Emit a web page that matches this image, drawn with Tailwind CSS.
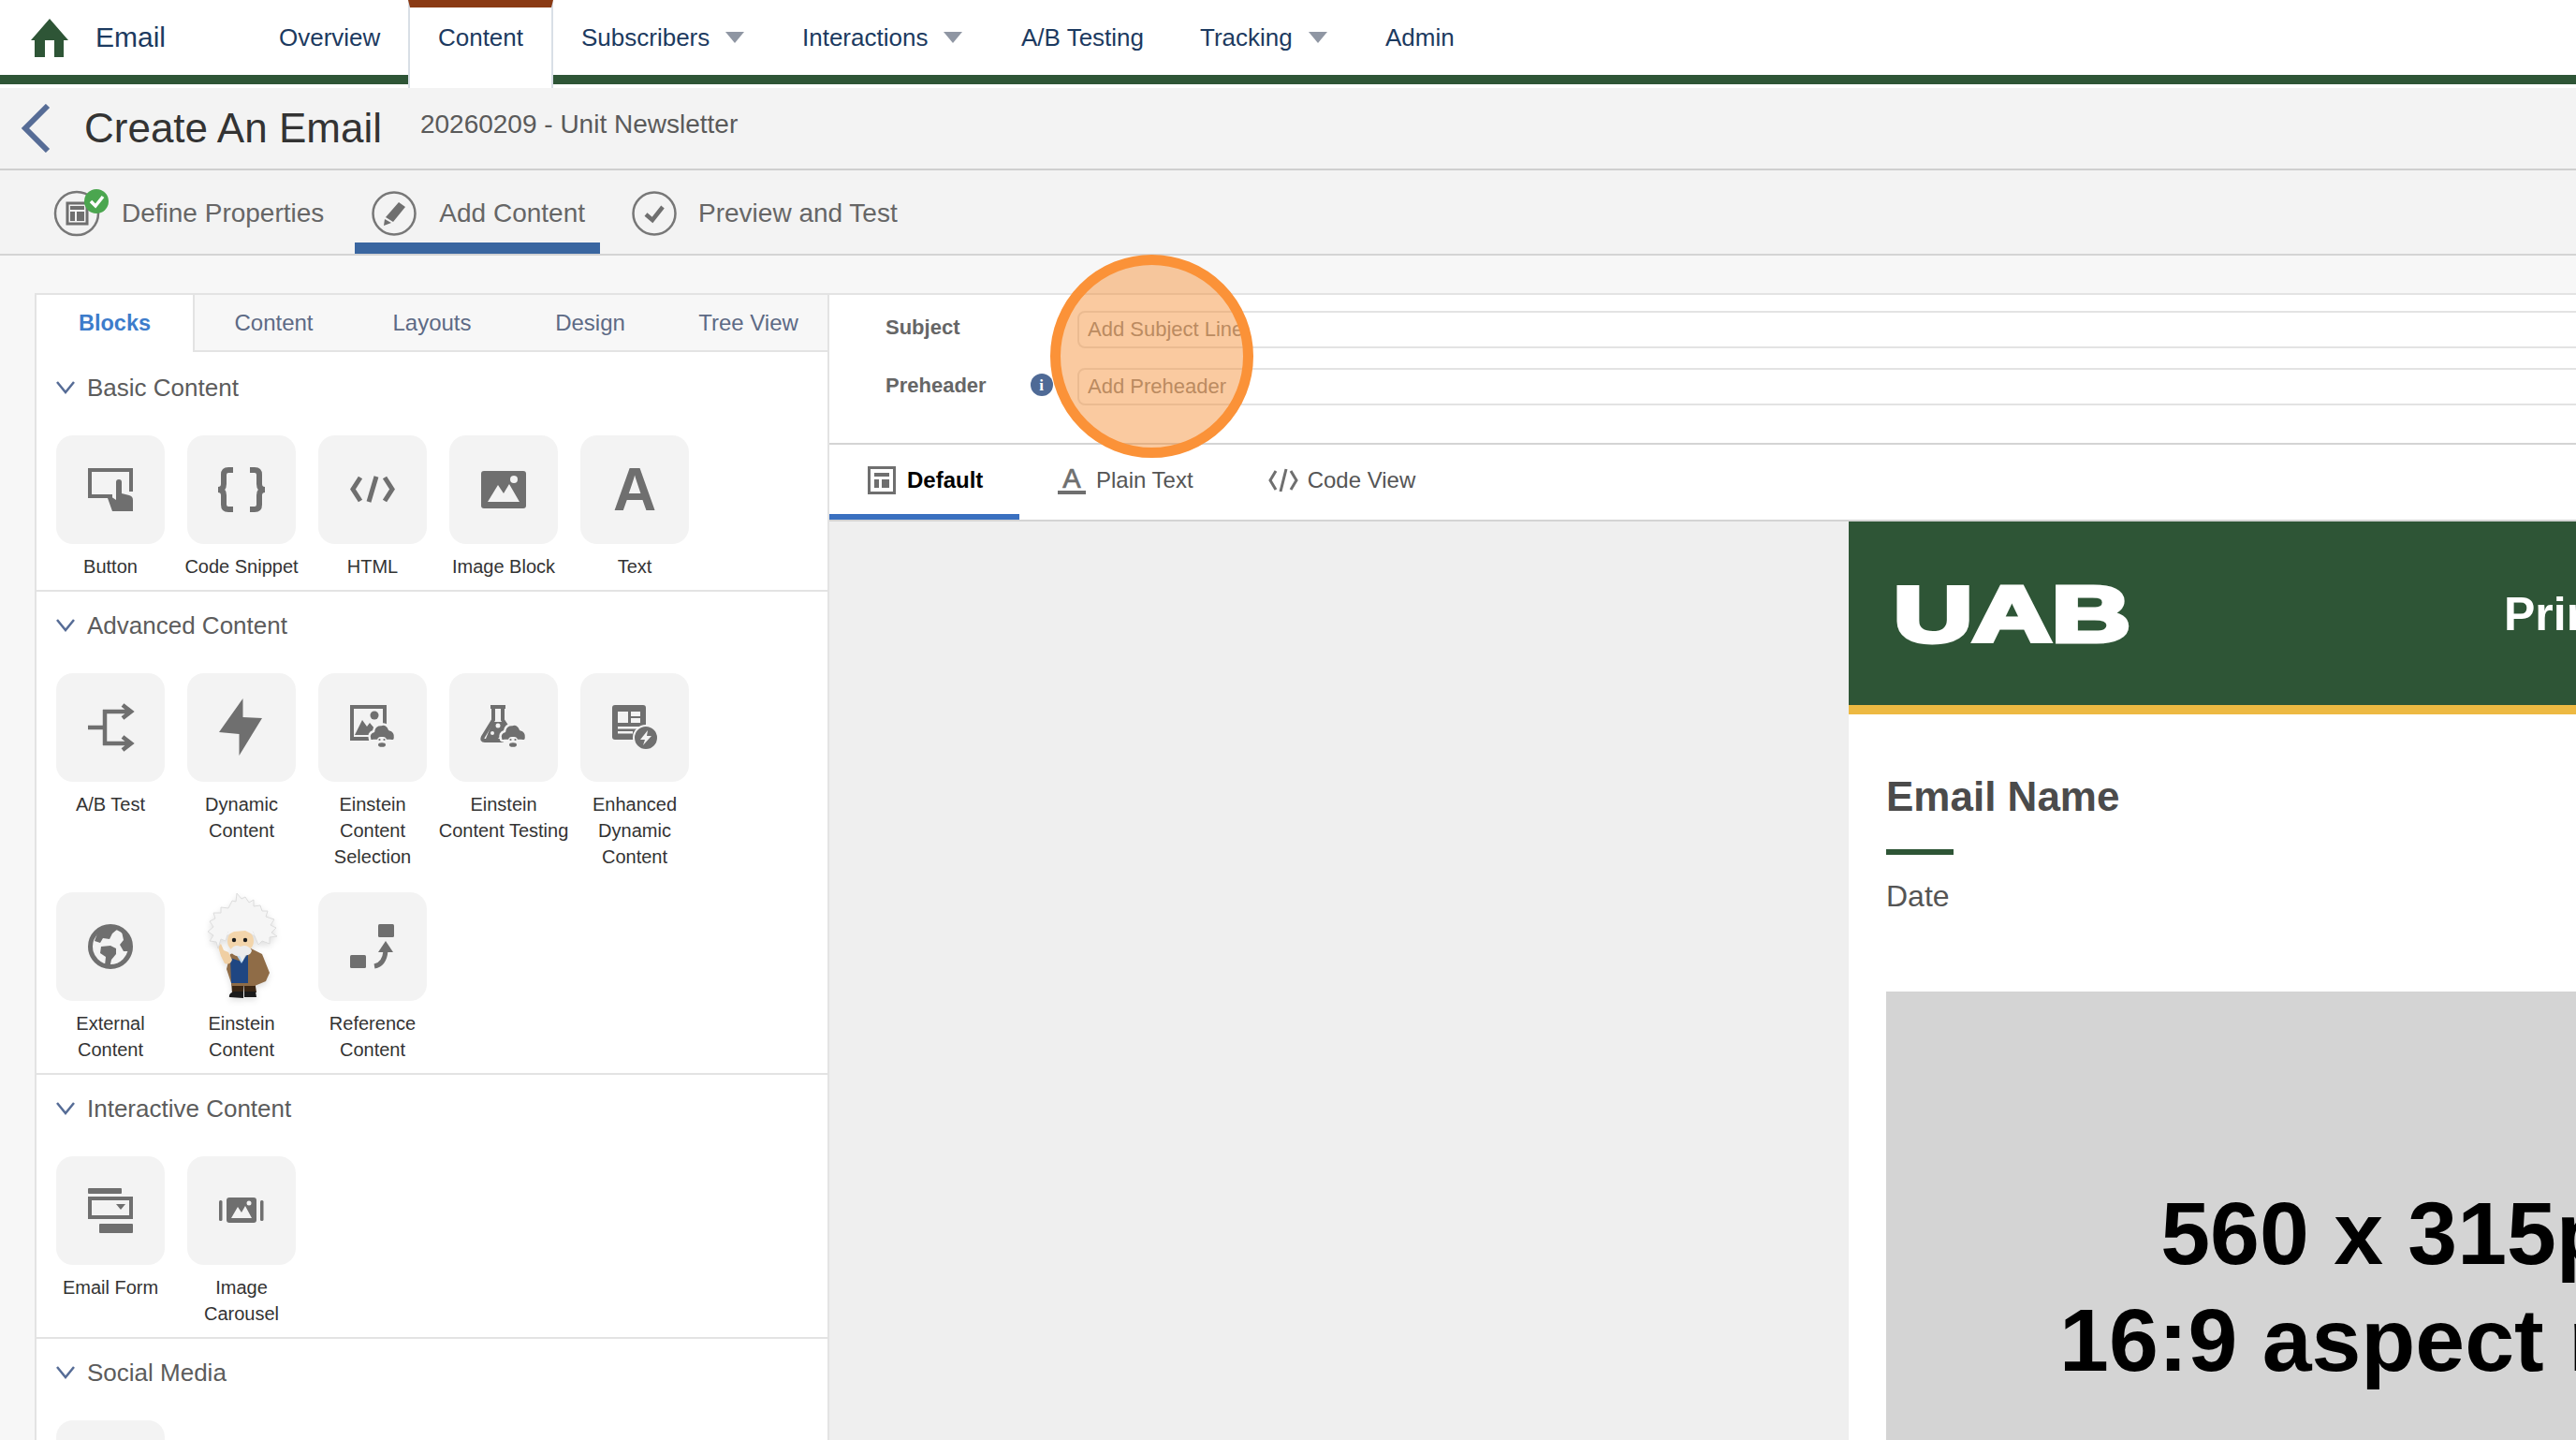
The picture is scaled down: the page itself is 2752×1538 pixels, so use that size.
<!DOCTYPE html>
<html lang="en">
<head>
  <meta charset="UTF-8">
  <meta name="viewport" content="width=device-width, initial-scale=1.0">
  <title>Create An Email</title>
  <script src="https://cdn.jsdelivr.net/npm/@tailwindcss/browser@4"></script>
</head>
<body class="relative h-[1538px] w-[2752px] overflow-hidden bg-white font-['Liberation_Sans',Arial,sans-serif]">

  <svg class="hidden">
    <symbol id="head" viewBox="-16 -16 32 32" overflow="visible">
      <path d="M-13 2Q-15-4-9-6Q-8-13-1-13Q5-15 8-8Q15-6 14 1Q14 5 9 4L-9 4Q-13 5-13 2Z" fill="#6f6f6f" stroke="#f3f3f3" stroke-width="2.5"/>
      <rect x="-5" y="0" width="10" height="11" rx="4" fill="#f3f3f3"/>
      <circle cx="-2.5" cy="3" r="1.1" fill="#6f6f6f"/>
      <circle cx="2.5" cy="3" r="1.1" fill="#6f6f6f"/>
      <ellipse cx="0" cy="8.5" rx="4" ry="2.3" fill="#6f6f6f"/>
    </symbol>
  </svg>

  <!-- App nav -->
  <header class="mb-1 flex h-[90px] border-b-[10px] border-[#2e5536] bg-white text-[26px] text-[#1c3a60]">
    <div class="flex w-[298px] items-center">
      <svg class="ml-[33px] h-[41px] w-[40px]" viewBox="0 0 40 41" fill="#2e5536"><path d="M20 0L40 23H35V41H25V23H15V41H4V23H0Z"/></svg>
      <span class="ml-[29px] mb-[2px] text-[30px]">Email</span>
    </div>
    <div class="flex h-[80px] w-[138px] items-center">Overview</div>
    <div class="relative flex h-[94px] w-[155px] items-start justify-center self-start border-x-2 border-t-8 border-x-[#d9dfe6] border-t-[#8a3a14] bg-white pt-[17px] leading-[30px]">Content</div>
    <div class="ml-[30px] flex h-[80px] w-[236px] items-center">Subscribers<svg class="ml-[17px] h-3 w-5" viewBox="0 0 20 12" fill="#8f96a3"><path d="M0 0H20L10 12Z"/></svg></div>
    <div class="flex h-[80px] w-[234px] items-center">Interactions<svg class="ml-[17px] h-3 w-5" viewBox="0 0 20 12" fill="#8f96a3"><path d="M0 0H20L10 12Z"/></svg></div>
    <div class="flex h-[80px] w-[191px] items-center">A/B Testing</div>
    <div class="flex h-[80px] w-[198px] items-center">Tracking<svg class="ml-[17px] h-3 w-5" viewBox="0 0 20 12" fill="#8f96a3"><path d="M0 0H20L10 12Z"/></svg></div>
    <div class="flex h-[80px] items-center">Admin</div>
  </header>

  <!-- Page title -->
  <div class="flex h-[88px] items-center border-b-2 border-[#cfcfcf] bg-[#f3f3f3]">
    <svg class="ml-[22px] h-[52px] w-[32px]" viewBox="0 0 32 52" fill="none" stroke="#566c96" stroke-width="6"><path d="M29 2L5 26L29 50"/></svg>
    <h1 class="ml-[36px] text-[44px] text-[#333]">Create An Email</h1>
    <span class="ml-[41px] mb-2 text-[28px] text-[#5a5a5a]">20260209 - Unit Newsletter</span>
  </div>

  <!-- Wizard steps -->
  <div class="flex h-[91px] gap-[15px] border-b-2 border-[#d4d4d4] bg-[#f3f3f3] pl-[39px] text-[28px] text-[#666]">
    <div class="flex h-[89px] items-center gap-[24px] border-b-[12px] border-transparent pt-[14px] pr-[18px] pl-[19px]">
      <svg class="h-12 w-12 overflow-visible" viewBox="0 0 48 48">
        <circle cx="24" cy="24" r="23" fill="none" stroke="#777" stroke-width="2.5"/>
        <rect x="14" y="13" width="21" height="22" fill="none" stroke="#6f6f6f" stroke-width="3"/>
        <rect x="17" y="16" width="15" height="4" fill="#6f6f6f"/>
        <rect x="17" y="22" width="5" height="10" fill="#6f6f6f"/>
        <rect x="24" y="22" width="8" height="10" fill="#6f6f6f"/>
        <circle cx="45" cy="11" r="13" fill="#4ba64f"/>
        <path d="M39 11L44 16L52 6" fill="none" stroke="#fff" stroke-width="3.5"/>
      </svg>
      <span>Define Properties</span>
    </div>
    <div class="flex h-[89px] items-center gap-[24px] border-b-[12px] border-[#3a66a0] pt-[14px] pr-[16px] pl-[18px]">
      <svg class="h-12 w-12" viewBox="0 0 48 48">
        <circle cx="24" cy="24" r="22.5" fill="none" stroke="#777" stroke-width="2.5"/>
        <path d="M29 12L36 17L23 33L15 28Z" fill="#6f6f6f"/>
        <path d="M14 30L21 34L13 37Z" fill="#6f6f6f"/>
      </svg>
      <span>Add Content</span>
    </div>
    <div class="flex h-[89px] items-center gap-[23px] border-b-[12px] border-transparent pt-[14px] pr-[18px] pl-[19px]">
      <svg class="h-12 w-12" viewBox="0 0 48 48">
        <circle cx="24" cy="24" r="22.5" fill="none" stroke="#777" stroke-width="2.5"/>
        <path d="M15 25L22 31L33 17" fill="none" stroke="#6f6f6f" stroke-width="4.5"/>
      </svg>
      <span>Preview and Test</span>
    </div>
  </div>

  <main class="flex h-[1265px] overflow-hidden bg-[#f7f7f7] pt-[40px] pl-[37px]">
    <!-- Blocks panel -->
    <aside class="h-full w-[849px] shrink-0 overflow-hidden border-x-2 border-t-2 border-[#e3e3e3] bg-white">
      <div class="grid h-[61px] grid-cols-5 items-stretch text-center text-[24px] text-[#5d6a85]">
        <div class="flex items-center justify-center border-r-2 border-[#e3e3e3] bg-white text-[23.5px] font-bold text-[#3d7ccb]">Blocks</div>
        <div class="flex items-center justify-center border-b-2 border-[#e3e3e3] bg-[#f7f7f7]">Content</div>
        <div class="flex items-center justify-center border-b-2 border-[#e3e3e3] bg-[#f7f7f7]">Layouts</div>
        <div class="flex items-center justify-center border-b-2 border-[#e3e3e3] bg-[#f7f7f7]">Design</div>
        <div class="flex items-center justify-center border-b-2 border-[#e3e3e3] bg-[#f7f7f7]">Tree View</div>
      </div>

      <!-- Basic Content -->
      <section class="border-b-2 border-[#e3e3e3] pt-[24px] pr-[20px] pb-[11px] pl-[21px]">
        <div class="flex h-[28px] items-center gap-[13px] text-[26px] text-[#5c5c5c]">
          <svg class="h-[14px] w-5" viewBox="0 0 20 14" fill="none" stroke="#566c96" stroke-width="2.5"><path d="M1 1L10 12L19 1"/></svg>Basic Content
        </div>
        <div class="mt-[37px] grid grid-cols-[repeat(5,116px)] gap-6">
          <div>
            <div class="h-[116px] w-[116px] rounded-[18px] bg-[#f3f3f3]">
              <svg class="h-full w-full" viewBox="0 0 116 116" fill="#6f6f6f">
                <path d="M60 65H36V37H80V60" fill="none" stroke="#6f6f6f" stroke-width="4"/>
                <path d="M64 50Q64 47 67 47Q70 47 70 50V62L78 64Q82 65 82 69V81H60L55 67Q55 64 58 65L64 69Z"/>
              </svg>
            </div>
            <p class="-mx-3 mt-[10px] text-center text-[20px] leading-[28px] whitespace-nowrap text-[#333]">Button</p>
          </div>
          <div>
            <div class="h-[116px] w-[116px] rounded-[18px] bg-[#f3f3f3]">
              <svg class="h-full w-full" viewBox="0 0 116 116" fill="none" stroke="#6f6f6f" stroke-width="6">
                <path d="M49 37H44Q39 37 39 42V52Q39 58 33 58Q39 58 39 64V74Q39 79 44 79H49"/>
                <path d="M67 37H72Q77 37 77 42V52Q77 58 83 58Q77 58 77 64V74Q77 79 72 79H67"/>
              </svg>
            </div>
            <p class="-mx-3 mt-[10px] text-center text-[20px] leading-[28px] whitespace-nowrap text-[#333]">Code Snippet</p>
          </div>
          <div>
            <div class="h-[116px] w-[116px] rounded-[18px] bg-[#f3f3f3]">
              <svg class="h-full w-full" viewBox="0 0 116 116" fill="none" stroke="#6f6f6f" stroke-width="5">
                <path d="M45 45L37 57.5L45 70M62 44L54 71M71 45L79 57.5L71 70"/>
              </svg>
            </div>
            <p class="-mx-3 mt-[10px] text-center text-[20px] leading-[28px] whitespace-nowrap text-[#333]">HTML</p>
          </div>
          <div>
            <div class="h-[116px] w-[116px] rounded-[18px] bg-[#f3f3f3]">
              <svg class="h-full w-full" viewBox="0 0 116 116">
                <rect x="34" y="38" width="48" height="40" rx="3" fill="#6f6f6f"/>
                <circle cx="69" cy="47" r="4" fill="#f3f3f3"/>
                <path d="M41 71L52 53L58 62L64 52L75 71Z" fill="#f3f3f3"/>
              </svg>
            </div>
            <p class="-mx-3 mt-[10px] text-center text-[20px] leading-[28px] whitespace-nowrap text-[#333]">Image Block</p>
          </div>
          <div>
            <div class="flex h-[116px] w-[116px] items-center justify-center rounded-[18px] bg-[#f3f3f3] text-[64px] font-bold text-[#6f6f6f]">A</div>
            <p class="-mx-3 mt-[10px] text-center text-[20px] leading-[28px] whitespace-nowrap text-[#333]">Text</p>
          </div>
        </div>
      </section>

      <!-- Advanced Content -->
      <section class="border-b-2 border-[#e3e3e3] pt-[22px] pr-[20px] pb-[11px] pl-[21px]">
        <div class="flex h-[28px] items-center gap-[13px] text-[26px] text-[#5c5c5c]">
          <svg class="h-[14px] w-5" viewBox="0 0 20 14" fill="none" stroke="#566c96" stroke-width="2.5"><path d="M1 1L10 12L19 1"/></svg>Advanced Content
        </div>
        <div class="mt-[37px] grid grid-cols-[repeat(5,116px)] gap-6">
          <div>
            <div class="h-[116px] w-[116px] rounded-[18px] bg-[#f3f3f3]">
              <svg class="h-full w-full" viewBox="0 0 116 116" fill="none" stroke="#6f6f6f" stroke-width="4.5">
                <path d="M34 58H52M52 39V77M50 41H78M50 75H78M71 34L80 41L71 48M71 68L80 75L71 82"/>
              </svg>
            </div>
            <p class="-mx-3 mt-[10px] text-center text-[20px] leading-[28px] whitespace-nowrap text-[#333]">A/B Test</p>
          </div>
          <div>
            <div class="h-[116px] w-[116px] rounded-[18px] bg-[#f3f3f3]">
              <svg class="h-full w-full" viewBox="0 0 116 116" fill="#6f6f6f"><path d="M59.5 27L34 63L55.5 65V88L80 48L59.5 47Z"/></svg>
            </div>
            <p class="-mx-3 mt-[10px] text-center text-[20px] leading-[28px] whitespace-nowrap text-[#333]">Dynamic<br>Content</p>
          </div>
          <div>
            <div class="h-[116px] w-[116px] rounded-[18px] bg-[#f3f3f3]">
              <svg class="h-full w-full overflow-visible" viewBox="0 0 116 116" fill="#6f6f6f">
                <rect x="36" y="36" width="35" height="34" fill="none" stroke="#6f6f6f" stroke-width="4"/>
                <circle cx="60" cy="45" r="4.5"/>
                <path d="M39 66L47 50L52 57L55 53L66 66Z"/>
                <use href="#head" x="52" y="52" width="32" height="32"/>
              </svg>
            </div>
            <p class="-mx-3 mt-[10px] text-center text-[20px] leading-[28px] whitespace-nowrap text-[#333]">Einstein<br>Content<br>Selection</p>
          </div>
          <div>
            <div class="h-[116px] w-[116px] rounded-[18px] bg-[#f3f3f3]">
              <svg class="h-full w-full overflow-visible" viewBox="0 0 116 116" fill="#6f6f6f">
                <path d="M44 36H60M47 36V50L36 68Q34 72 38 72H58M57 36V50L65 62" fill="none" stroke="#6f6f6f" stroke-width="4"/>
                <path d="M43 60L47 52L58 52L62 60L52 70H39Z"/>
                <circle cx="46" cy="64" r="2" fill="#f3f3f3"/>
                <circle cx="52" cy="56" r="2.5" fill="#f3f3f3"/>
                <use href="#head" x="52" y="52" width="32" height="32"/>
              </svg>
            </div>
            <p class="-mx-3 mt-[10px] text-center text-[20px] leading-[28px] whitespace-nowrap text-[#333]">Einstein<br>Content Testing</p>
          </div>
          <div>
            <div class="h-[116px] w-[116px] rounded-[18px] bg-[#f3f3f3]">
              <svg class="h-full w-full" viewBox="0 0 116 116" fill="#6f6f6f">
                <rect x="34" y="34" width="36" height="37" rx="3"/>
                <rect x="40" y="41" width="11" height="12" fill="#f3f3f3"/>
                <rect x="54" y="41" width="10" height="5" fill="#f3f3f3"/>
                <rect x="54" y="48" width="10" height="5" fill="#f3f3f3"/>
                <rect x="40" y="57" width="24" height="2.5" fill="#f3f3f3"/>
                <rect x="40" y="62" width="16" height="2.5" fill="#f3f3f3"/>
                <circle cx="70" cy="69" r="13" stroke="#f3f3f3" stroke-width="2"/>
                <path d="M72 61L64 71H69L67 77L76 67H71Z" fill="#f3f3f3"/>
              </svg>
            </div>
            <p class="-mx-3 mt-[10px] text-center text-[20px] leading-[28px] whitespace-nowrap text-[#333]">Enhanced<br>Dynamic<br>Content</p>
          </div>
          <div>
            <div class="h-[116px] w-[116px] rounded-[18px] bg-[#f3f3f3]">
              <svg class="h-full w-full" viewBox="0 0 116 116" fill="#6f6f6f">
                <circle cx="58" cy="58" r="21.5" fill="none" stroke="#6f6f6f" stroke-width="5"/>
                <path d="M44 44Q50 36 60 36L66 39L60 44L57 50L50 49L47 54L41 52Z"/>
                <path d="M48 58L58 57L64 60L64 66L59 72L57 81L52 78L53 69L47 65Z"/>
                <path d="M70 42L79 52L78 63L72 63L68 56L72 51Z"/>
              </svg>
            </div>
            <p class="-mx-3 mt-[10px] text-center text-[20px] leading-[28px] whitespace-nowrap text-[#333]">External<br>Content</p>
          </div>
          <div>
            <div class="h-[116px] w-[116px]">
              <svg class="h-full w-full overflow-visible drop-shadow-md" viewBox="0 0 116 116">
                <!-- jacket, vest, trousers, shoes first so the hair and face sit on top -->
                <path d="M60 94H72L74 107H61ZM47 94H60L60 108H48Z" fill="#3a2614"/>
                <path d="M50 106Q44 108 45 112L60 113L60 106ZM61 106V112H74L73 106Z" fill="#1b1b1b"/>
                <path d="M46 66L68 60L80 66L88 86L84 95L72 100H48L42 82Z" fill="#8f6c47"/>
                <path d="M46 70L58 74L65 66V97H47Z" fill="#1f4682"/>
                <path d="M52 66L58 76L65 64Z" fill="#bcd8f2"/>
                <path d="M33 58L36 68L40 76Q46 78 48 72L44 64L39 62L36 55Z" fill="#f0cfa3"/>
                <path d="M53 1L58 7L62 5L66 11L71 8L71 15L78 14L80 20L86 20L84 26L93 29L89 35L95 38L90 43L96 47L88 48L88 55L80 52L76 56L70 42L44 42L41 52L36 50L33 60L31 53L24 52L28 46L22 42L28 37L24 31L30 28L28 22L36 22L36 16L44 17L48 9L52 10Z" fill="#f5f5f5" stroke="#dcdcdc"/>
                <ellipse cx="57" cy="52" rx="14" ry="13" fill="#f3d5ab"/>
                <path d="M48 33Q58 30 68 38L72 46L62 41L50 42L42 46Z" fill="#f5f5f5"/>
                <circle cx="50" cy="51" r="2.2" fill="#1b1b1b"/>
                <circle cx="62" cy="51" r="2.2" fill="#1b1b1b"/>
                <path d="M46 62Q50 55 57 58Q64 55 69 62Q68 68 62 67L59 74L56 68Q49 69 46 62Z" fill="#ececec"/>
              </svg>
            </div>
            <p class="-mx-3 mt-[10px] text-center text-[20px] leading-[28px] whitespace-nowrap text-[#333]">Einstein<br>Content</p>
          </div>
          <div>
            <div class="h-[116px] w-[116px] rounded-[18px] bg-[#f3f3f3]">
              <svg class="h-full w-full" viewBox="0 0 116 116" fill="#6f6f6f">
                <rect x="64" y="34" width="17" height="14" rx="1.5"/>
                <rect x="34" y="67" width="17" height="14" rx="1.5"/>
                <path d="M60 79Q71 77 72 62" fill="none" stroke="#6f6f6f" stroke-width="5"/>
                <path d="M72 52L80 64H64Z"/>
              </svg>
            </div>
            <p class="-mx-3 mt-[10px] text-center text-[20px] leading-[28px] whitespace-nowrap text-[#333]">Reference<br>Content</p>
          </div>
        </div>
      </section>

      <!-- Interactive Content -->
      <section class="border-b-2 border-[#e3e3e3] pt-[22px] pr-[20px] pb-[11px] pl-[21px]">
        <div class="flex h-[28px] items-center gap-[13px] text-[26px] text-[#5c5c5c]">
          <svg class="h-[14px] w-5" viewBox="0 0 20 14" fill="none" stroke="#566c96" stroke-width="2.5"><path d="M1 1L10 12L19 1"/></svg>Interactive Content
        </div>
        <div class="mt-[37px] grid grid-cols-[repeat(5,116px)] gap-6">
          <div>
            <div class="h-[116px] w-[116px] rounded-[18px] bg-[#f3f3f3]">
              <svg class="h-full w-full" viewBox="0 0 116 116" fill="#6f6f6f">
                <rect x="34" y="34" width="36" height="6" rx="1"/>
                <rect x="36" y="45" width="44" height="20" fill="none" stroke="#6f6f6f" stroke-width="4"/>
                <path d="M64 51H74L69 57Z"/>
                <rect x="46" y="72" width="36" height="10" rx="1"/>
              </svg>
            </div>
            <p class="-mx-3 mt-[10px] text-center text-[20px] leading-[28px] whitespace-nowrap text-[#333]">Email Form</p>
          </div>
          <div>
            <div class="h-[116px] w-[116px] rounded-[18px] bg-[#f3f3f3]">
              <svg class="h-full w-full" viewBox="0 0 116 116" fill="#6f6f6f">
                <rect x="42" y="44" width="32" height="27" rx="3"/>
                <rect x="34" y="47" width="3.5" height="22" rx="1.5"/>
                <rect x="78" y="47" width="3.5" height="22" rx="1.5"/>
                <circle cx="66" cy="50" r="2.5" fill="#f3f3f3"/>
                <path d="M47 66L54 54L58 60L62 53L69 66Z" fill="#f3f3f3"/>
              </svg>
            </div>
            <p class="-mx-3 mt-[10px] text-center text-[20px] leading-[28px] whitespace-nowrap text-[#333]">Image<br>Carousel</p>
          </div>
        </div>
      </section>

      <!-- Social Media -->
      <section class="pt-[22px] pr-[20px] pb-[11px] pl-[21px]">
        <div class="flex h-[28px] items-center gap-[13px] text-[26px] text-[#5c5c5c]">
          <svg class="h-[14px] w-5" viewBox="0 0 20 14" fill="none" stroke="#566c96" stroke-width="2.5"><path d="M1 1L10 12L19 1"/></svg>Social Media
        </div>
        <div class="mt-[37px] h-[116px] w-[116px] rounded-[18px] bg-[#f3f3f3]"></div>
      </section>
    </aside>

    <!-- Editor -->
    <div class="flex min-w-0 flex-1 flex-col border-t-2 border-[#e3e3e3] bg-white">
      <div class="flex flex-col gap-[21px] border-b-2 border-[#d4d4d4] pt-[17px] pb-[40px] pl-[60px]">
        <div class="flex h-[40px] items-center">
          <label class="-mt-[6px] w-[205px] shrink-0 text-[22px] font-bold text-[#666]">Subject</label>
          <input class="h-[40px] w-[1700px] shrink-0 rounded-lg border-2 border-[#e3e3e3] px-[9px] text-[22px] placeholder:text-[#8c8c8c]" placeholder="Add Subject Line">
        </div>
        <div class="flex h-[40px] items-center">
          <label class="-mt-1 flex w-[205px] shrink-0 items-center text-[22px] font-bold text-[#666]">Preheader<span class="ml-[47px] flex h-6 w-6 items-center justify-center rounded-full bg-[#4f6a96] font-['Liberation_Serif',serif] text-[17px] leading-none text-white">i</span></label>
          <input class="h-[40px] w-[1700px] shrink-0 rounded-lg border-2 border-[#e3e3e3] px-[9px] text-[22px] placeholder:text-[#8c8c8c]" placeholder="Add Preheader">
        </div>
      </div>

      <div class="flex h-[82px] border-b-2 border-[#d4d4d4] text-[24px] text-[#555]">
        <div class="flex w-[203px] items-center gap-3 border-b-[6px] border-[#3a70c0] pt-[2px] pl-[41px] font-bold text-black">
          <svg class="h-[30px] w-[30px]" viewBox="0 0 30 30" fill="#6f6f6f">
            <rect x="1.5" y="1.5" width="27" height="27" fill="none" stroke="#6f6f6f" stroke-width="3"/>
            <rect x="7" y="7" width="16" height="4"/>
            <rect x="7" y="14" width="5" height="9"/>
            <rect x="15" y="14" width="8" height="9"/>
          </svg>
          Default
        </div>
        <div class="ml-[41px] flex items-center gap-[11px] border-b-[6px] border-transparent pt-[2px]">
          <span class="flex h-[30px] w-[30px] flex-col items-center border-b-4 border-[#6f6f6f] text-[29px] leading-[26px] text-[#6f6f6f] [-webkit-text-stroke:0.7px_#6f6f6f]">A</span>
          Plain Text
        </div>
        <div class="ml-[80px] flex items-center gap-[10px] border-b-[6px] border-transparent pt-[2px]">
          <svg class="h-[26px] w-[32px]" viewBox="0 0 32 26" fill="none" stroke="#6f6f6f" stroke-width="3"><path d="M8 3L2 13L8 23M19 1L13 25M24 3L30 13L24 23"/></svg>
          Code View
        </div>
      </div>

      <!-- Canvas -->
      <div class="flex min-h-0 flex-1 overflow-hidden bg-[#efefef] pl-[1089px]">
        <div class="w-[1200px] shrink-0 bg-white">
          <div class="flex h-[206px] items-start border-b-[10px] border-[#edb942] bg-[#2e5536] pt-[66px] pl-[49px]">
            <svg class="h-[64px] w-[251px] shrink-0 overflow-visible" viewBox="0 0 251 64"><text x="-1" y="62" font-size="84" font-weight="bold" textLength="253" lengthAdjust="spacingAndGlyphs" fill="#fff" stroke="#fff" stroke-width="5">UAB</text></svg>
            <span class="ml-[400px] text-[50px] leading-[66px] font-bold whitespace-nowrap text-white">Prin</span>
          </div>
          <div class="pt-[60px] pl-[40px]">
            <h2 class="text-[44px] leading-[56px] font-bold text-[#4b4b4b]">Email Name</h2>
            <div class="mt-[28px] h-[6px] w-[72px] bg-[#2e5536]"></div>
            <p class="mt-[24px] text-[32px] leading-[40px] text-[#555]">Date</p>
            <div class="mt-[82px] flex h-[630px] w-[1120px] items-center justify-center bg-[#d4d4d4] text-center text-[95px] leading-[114px] font-bold text-black">
              <p class="-mt-px">560 x 315px<br>16:9 aspect ratio</p>
            </div>
          </div>
        </div>
      </div>
    </div>
  </main>

  <!-- Tutorial highlight over the subject fields -->
  <div class="absolute top-[272px] left-[1122px] h-[217px] w-[217px] rounded-full border-[11px] border-[#fb9238] bg-[#f58a2c]/45"></div>
</body>
</html>
